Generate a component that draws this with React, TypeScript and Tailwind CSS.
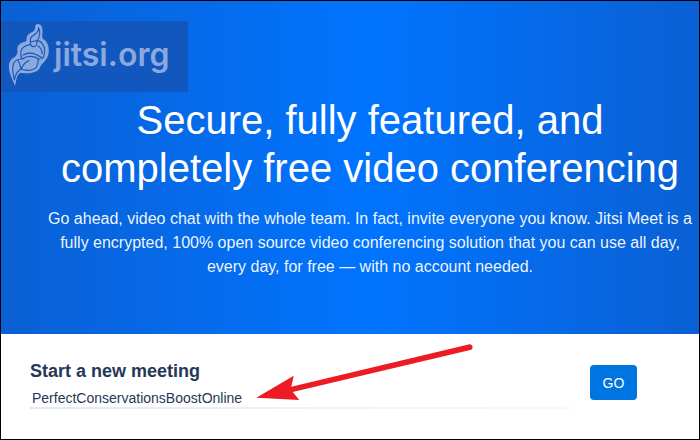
import { useState, type FormEvent } from 'react'

function JitsiMark() {
  return (
    <svg className="absolute top-0 left-1 h-[71px] w-12" viewBox="5 21 48 71" fill="none" aria-hidden="true">
      <path
        d="M38 24C35.500 24 35 26 35 28.500C34.500 31 32 32 29.500 33.500C27 35 26.500 37 26.500 40.500C26 42 23 42 20.500 43.500C17.500 45 17 48 17.500 52C17 55 16 56 14 57.500C10 59.500 8.500 63 9 68C9.500 75 13 80 15 86C16.500 81 16 76 20 73C24 72.500 27 74 31 73C36 72 39.500 70 40.500 66C43 63 47.500 59 48.500 54C49.500 48 48 41.500 43 39C41.500 37 42.500 34 42.500 31C42.500 27 41 24 38 24Z"
        fill="#8aa9de"
      />
      <path
        d="M38.500 27.500C39 31 36 34 32.500 36C30.500 37.500 30 39.500 30.500 42M38.500 27.500C41 33 40 37 37 41M30.500 42L37 40.500M30.500 42C30 45.500 31.500 47 35 46.500C37.500 45 37 43 37 41C41 40 43 44 44.500 48C45 53 44.500 56 42.500 58.500M30 44.500C25 45.500 22 47 21 51C20.500 54 21 57 22.500 59M38 46C41 48 42.500 50 42 54M23 55C29 51.500 35 52.500 42.500 58.500M22.500 59C28 55 34 56 40 59.500M22.500 59C20 59 15 60 13.500 63.500C12 69 13 75 14.500 80C15 75 17 71.500 21 69M18 61C19.500 62 20 65 21 69C23 65 25 62 29 60.500M21 69C27 71.500 34 70.500 36.500 67C37.500 65 38.500 62 38 59.500"
        stroke="#1456b8"
        strokeWidth="1.1"
        strokeLinecap="round"
        strokeLinejoin="round"
      />
    </svg>
  )
}

function Arrow() {
  return (
    <svg
      className="pointer-events-none absolute top-2 left-[254px] h-[60px] w-[222px]"
      viewBox="255 342 222 60"
      aria-hidden="true"
    >
      <path
        d="M256.300 397.700L293.700 375.700L291.300 386.700L469.500 344.200A3 3 0 0 1 471.300 349.700L292.700 392L299.300 400Z"
        fill="#ed1c24"
      />
    </svg>
  )
}

function Hero() {
  return (
    <header className="bg-linear-to-r from-[#0a60d4] via-[#0074ff] via-53% to-[#0a60d4] pt-5 pb-[55px] text-white">
      <a
        href="#home"
        className="relative flex h-[71px] w-[187px] items-center bg-[#1157bd] pb-1 pl-[53px] font-[Inter,sans-serif] text-[32px] font-semibold text-[#8aa9de]"
      >
        <JitsiMark />
        jitsi.org
      </a>
      <div className="mt-1 pl-10 text-center">
        <h1 className="text-[40px] leading-12">
          Secure, fully featured, and completely free video conferencing
        </h1>
        <p className="mt-[15px] text-base text-white/95">
          Go ahead, video chat with the whole team. In fact, invite everyone you know. Jitsi Meet is a fully
          encrypted, 100% open source video conferencing solution that you can use all day, every day, for free —
          with no account needed.
        </p>
      </div>
    </header>
  )
}

function MeetingForm() {
  const [room, setRoom] = useState('PerfectConservationsBoostOnline')

  function handleSubmit(e: FormEvent) {
    e.preventDefault()
  }

  return (
    <form onSubmit={handleSubmit} className="relative flex items-start gap-[18px] pt-[25px] pr-[62px] pb-[30px] pl-[29px]">
      <div className="flex-1">
        <label htmlFor="room" className="block text-lg leading-6 font-bold text-[#253858]">
          Start a new meeting
        </label>
        <input
          id="room"
          type="text"
          value={room}
          onChange={(e) => setRoom(e.target.value)}
          className="mt-1.5 block h-[18px] w-full px-0.5 text-sm text-[#253858] outline-none"
        />
        <div className="h-0.5 bg-linear-to-r from-[#e5e8ef] to-[#fafafa]" />
      </div>
      <button type="submit" className="mt-1.5 h-[35px] w-[47px] rounded bg-[#0074e0] text-sm text-white">
        GO
      </button>
      <Arrow />
    </form>
  )
}

export default function App() {
  return (
    <main className="border border-black bg-white font-['Liberation_Sans',Arial,sans-serif]">
      <Hero />
      <MeetingForm />
    </main>
  )
}
